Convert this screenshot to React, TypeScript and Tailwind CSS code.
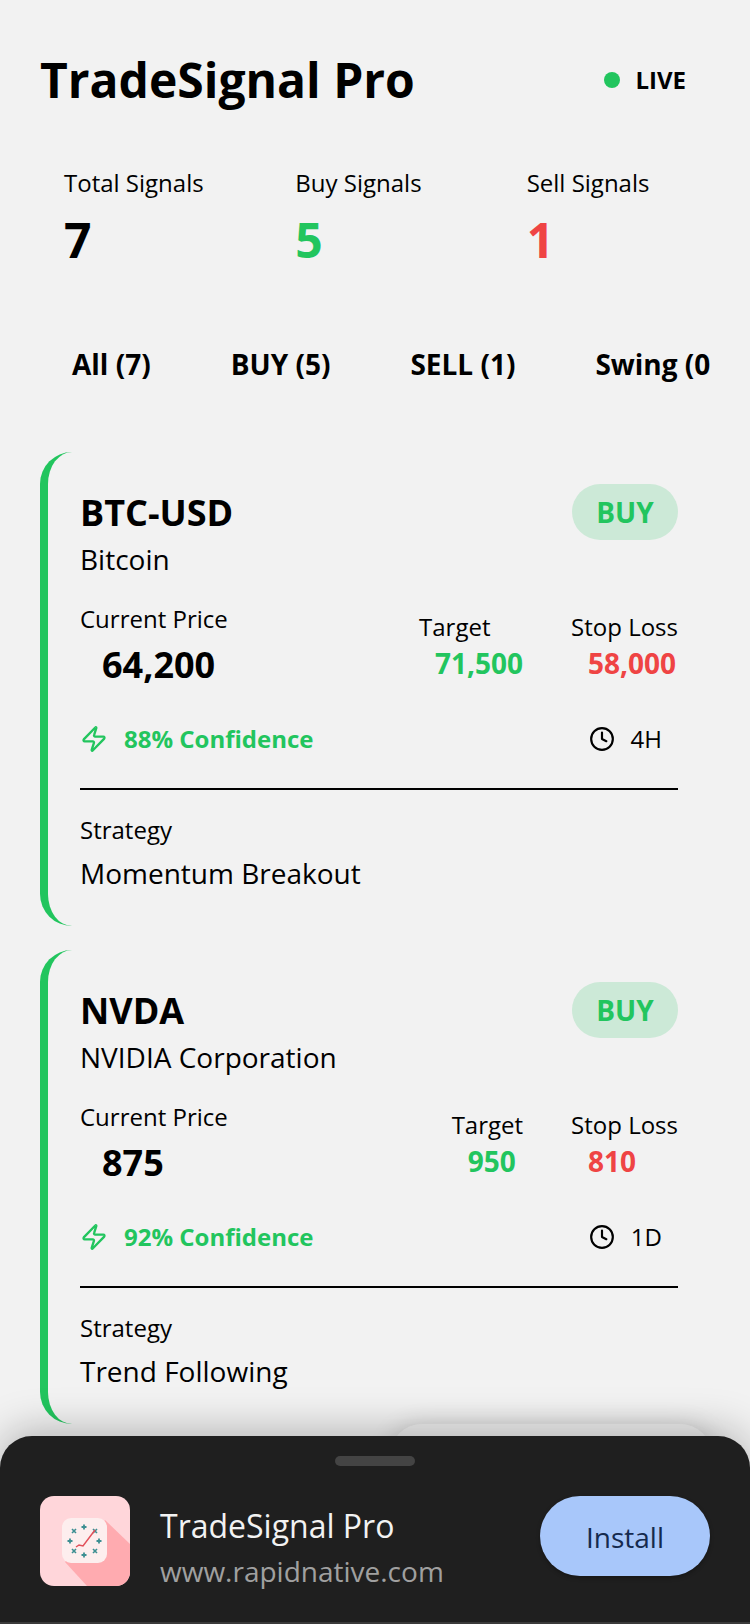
import React from "react";
import { Zap, Clock } from "lucide-react";

type Sig = { sym: string; name: string; price: string; target: string; stop: string; conf: string; tf: string; strat: string };
const signals: Sig[] = [
  { sym: "BTC-USD", name: "Bitcoin", price: "64,200", target: "71,500", stop: "58,000", conf: "88% Confidence", tf: "4H", strat: "Momentum Breakout" },
  { sym: "NVDA", name: "NVIDIA Corporation", price: "875", target: "950", stop: "810", conf: "92% Confidence", tf: "1D", strat: "Trend Following" },
];

function Stat({ label, value, color }: { label: string; value: string; color: string }) {
  return (
    <div className="flex-1 pl-6">
      <div className="text-[24px] leading-[32px] text-black">{label}</div>
      <div className={`text-[48px] leading-[64px] mt-[9px] font-bold ${color}`}>{value}</div>
    </div>
  );
}

function Card({ s }: { s: Sig }) {
  return (
    <div className="border-l-8 border-[#22c55e] rounded-[32px] h-[474px] pl-8 pr-8 pt-8 shrink-0">
      <div className="flex justify-between items-start">
        <div>
          <div className="text-[36px] leading-[56px] mt-[1px] font-bold text-black">{s.sym}</div>
          <div className="text-[28px] leading-[36px] text-black">{s.name}</div>
        </div>
        <div className="h-14 w-[106px] rounded-[28px] bg-[#cce9d7] flex items-center justify-center text-[28px] font-bold text-[#22c55e]">BUY</div>
      </div>
      <div className="flex justify-between items-start mt-[26px]">
        <div>
          <div className="text-[24px] leading-[32px] text-black">Current Price</div>
          <div className="text-[36px] leading-[54px] font-bold text-black pl-[22px] mt-[3px]">{s.price}</div>
        </div>
        <div className="flex gap-12 mt-[8px]">
          <div className="flex flex-col">
            <div className="text-[24px] leading-[32px] text-black">Target</div>
            <div className="text-[28px] leading-[40px] font-bold text-[#22c55e] pl-4">{s.target}</div>
          </div>
          <div className="flex flex-col">
            <div className="text-[24px] leading-[32px] text-black">Stop Loss</div>
            <div className="text-[28px] leading-[40px] font-bold text-[#ef4444] pl-[17px]">{s.stop}</div>
          </div>
        </div>
      </div>
      <div className="flex justify-between items-center mt-[31px] h-8">
        <div className="flex items-center gap-4">
          <Zap size={28} strokeWidth={2} className="text-[#22c55e]" />
          <span className="text-[24px] font-bold text-[#22c55e]">{s.conf}</span>
        </div>
        <div className="flex items-center gap-4 pr-4">
          <Clock size={26} strokeWidth={2} className="text-black" />
          <span className="text-[24px] text-black">{s.tf}</span>
        </div>
      </div>
      <div className="h-[2px] bg-black mt-[33px]" />
      <div className="text-[24px] leading-[32px] text-black mt-[24px]">Strategy</div>
      <div className="text-[28px] leading-[40px] text-black mt-[7px]">{s.strat}</div>
    </div>
  );
}

function AppIcon() {
  const plus: [number, number][] = [[44, 31], [30, 45], [59, 45], [44, 59]];
  const cross: [number, number][] = [[34, 35], [55, 35], [34, 55], [55, 55]];
  return (
    <svg width="90" height="90" viewBox="0 0 90 90" className="rounded-[14px] shrink-0">
      <rect width="90" height="90" fill="#ffd6da" />
      <path d="M65 24 L90 48 L90 90 L47 90 L25 66 Z" fill="#ffabb0" />
      <rect x="22" y="22" width="45" height="45" rx="9" fill="#fdeeee" />
      {plus.map(([x, y], i) => (
        <path key={i} d={`M${x - 2.5} ${y}H${x + 2.5}M${x} ${y - 2.5}V${y + 2.5}`} stroke="#3d8f92" strokeWidth="1.8" />
      ))}
      {cross.map(([x, y], i) => (
        <path key={i} d={`M${x - 2} ${y - 2}L${x + 2} ${y + 2}M${x + 2} ${y - 2}L${x - 2} ${y + 2}`} stroke="#3d8f92" strokeWidth="1.6" />
      ))}
      <path d="M36 51 L39 49 L43 50 L55 34" fill="none" stroke="#e2505a" strokeWidth="1.5" />
    </svg>
  );
}

export default function App() {
  return (
    <div className="relative w-[750px] h-[1624px] overflow-hidden bg-[#f2f2f2] font-['Open_Sans',sans-serif]">
      <div className="flex justify-between items-center pl-10 pr-[64px] pt-[48px]">
        <div className="text-[48px] leading-[64px] font-bold text-black">TradeSignal Pro</div>
        <div className="flex items-center gap-[15px]">
          <div className="w-4 h-4 rounded-full bg-[#22c55e]" />
          <span className="text-[24px] leading-[32px] font-bold text-black">LIVE</span>
        </div>
      </div>
      <div className="flex gap-6 mx-10 mt-[55px]">
        <Stat label="Total Signals" value="7" color="text-black" />
        <Stat label="Buy Signals" value="5" color="text-[#22c55e]" />
        <Stat label="Sell Signals" value="1" color="text-[#ef4444]" />
      </div>
      <div className="mx-10 mt-[72px] overflow-hidden flex whitespace-nowrap text-[28px] leading-[40px] font-bold text-black">
        <div className="px-8 shrink-0">All (7)</div>
        <div className="px-8 shrink-0 ml-4">BUY (5)</div>
        <div className="px-8 shrink-0 ml-4">SELL (1)</div>
        <div className="px-8 shrink-0 ml-4">Swing (0)</div>
      </div>
      <div className="mx-10 mt-[68px] flex flex-col gap-6">
        {signals.map((s) => (
          <Card key={s.sym} s={s} />
        ))}
      </div>
      <div className="absolute left-[390px] top-[1423px] w-[322px] h-[80px] rounded-[32px] bg-[#eeeeee] border-t border-[#e2e2e2] shadow-[0_2px_24px_rgba(0,0,0,0.16)]" />
      <div className="absolute left-0 right-0 top-[1436px] h-[186px] bg-[#1f1f1f] rounded-t-[32px] shadow-[0_-6px_40px_rgba(0,0,0,0.26)]">
        <div className="w-20 h-[10px] rounded-full bg-[#444444] mx-auto mt-5" />
        <div className="flex items-start px-10 mt-[30px]">
          <AppIcon />
          <div className="ml-[30px] flex-1">
            <div className="text-[32px] leading-[40px] text-[#f2f2f2] mt-[10px]">TradeSignal Pro</div>
            <div className="text-[28px] leading-[36px] text-[#a0a0a0] mt-[7px]">www.rapidnative.com</div>
          </div>
          <div className="w-[170px] h-20 rounded-[40px] bg-[#a8c7fa] flex items-center justify-center pt-[2px] text-[28px] text-[#152a4e] shadow-[0_2px_4px_rgba(0,0,0,0.3)]">Install</div>
        </div>
      </div>
      <div className="absolute left-0 right-0 bottom-0 h-[2px] bg-[#3a3a3a]" />
    </div>
  );
}
